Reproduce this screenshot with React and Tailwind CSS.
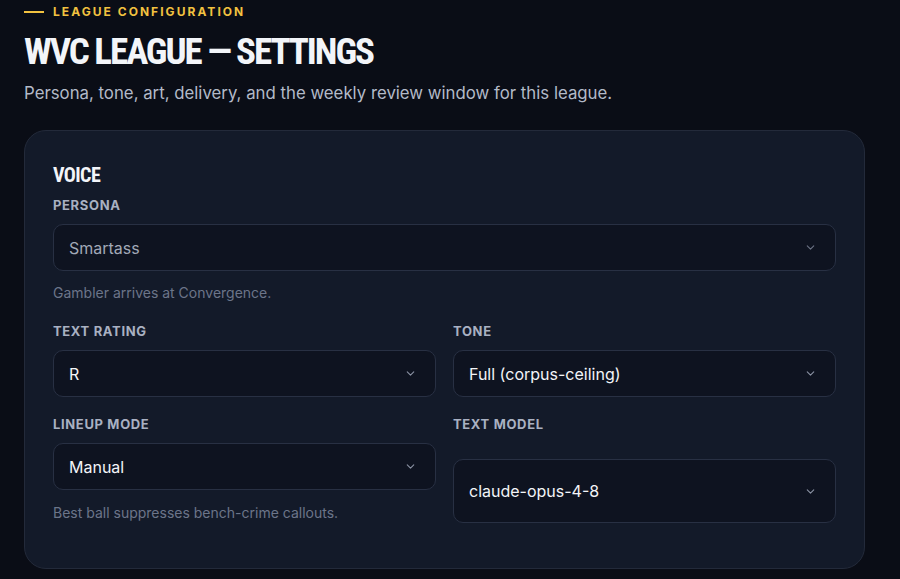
import { ChevronDown } from "lucide-react";

const display = { fontFamily: '"Roboto Condensed", "Liberation Sans Narrow", "DejaVu Sans Condensed", sans-serif' };

function Field({ label, value, muted, className = "" }) {
  return (
    <div className={`flex flex-col ${className}`}>
      <label className="text-[13px] font-bold tracking-wider text-[#a9b1c2] leading-4">{label}</label>
      <div className="mt-[11px] flex h-[47px] items-center justify-between rounded-[10px] border border-[#283043] bg-[#0e1320] pl-[15px] pr-[18px]">
        <span className={`text-[16px] ${muted ? "text-[#a2a9b7]" : "text-[#f3f5f8]"}`}>{value}</span>
        <ChevronDown size={13} strokeWidth={2} className={muted ? "text-[#6b7385]" : "text-[#8a92a3]"} />
      </div>
    </div>
  );
}

export default function App() {
  return (
    <div className="min-h-[579px] bg-[#0a0d16] px-6 pt-[4px]" style={{ fontFamily: 'Inter, "Liberation Sans", sans-serif' }}>
      <div className="flex items-center gap-[9px]">
        <span className="h-[2px] w-[20px] bg-[#f2c240]" />
        <span className="text-[12px] font-bold tracking-[0.17em] text-[#f2c240] leading-4">LEAGUE CONFIGURATION</span>
      </div>

      <h1 className="mt-[13px] text-[37px] font-bold leading-[37px] tracking-[-0.055em] text-[#f3f5f9]" style={display}>
        WVC LEAGUE — SETTINGS
      </h1>

      <p className="mt-[11px] text-[16.8px] leading-6 text-[#b3bac8]">
        Persona, tone, art, delivery, and the weekly review window for this league.
      </p>

      <div className="mt-[25px] w-[841px] rounded-[22px] border border-[#232a3a] bg-[#131a29] px-7 pt-[32px] pb-[45px]">
        <h2 className="text-[20px] font-bold leading-6 tracking-[-0.03em] text-[#f3f5f9]" style={display}>VOICE</h2>

        <Field className="mt-[10px]" label="PERSONA" value="Smartass" muted />
        <p className="mt-[12px] text-[14px] leading-5 text-[#6c7589]">Gambler arrives at Convergence.</p>

        <div className="mt-[20px] grid grid-cols-2 gap-x-[17px]">
          <Field label="TEXT RATING" value="R" />
          <Field label="TONE" value="Full (corpus-ceiling)" />

          <div className="mt-[19px]">
            <Field label="LINEUP MODE" value="Manual" />
            <p className="mt-[13px] text-[14px] leading-5 text-[#6c7589]">Best ball suppresses bench-crime callouts.</p>
          </div>
          <div className="mt-[19px] flex flex-col">
            <label className="text-[13px] font-bold tracking-wider text-[#a9b1c2] leading-4">TEXT MODEL</label>
            <div className="mt-[27px] flex h-[64px] items-center justify-between rounded-[10px] border border-[#283043] bg-[#0e1320] pl-[15px] pr-[18px]">
              <span className="text-[16px] text-[#f3f5f8]">claude-opus-4-8</span>
              <ChevronDown size={13} strokeWidth={2} className="text-[#8a92a3]" />
            </div>
          </div>
        </div>
      </div>
    </div>
  );
}
